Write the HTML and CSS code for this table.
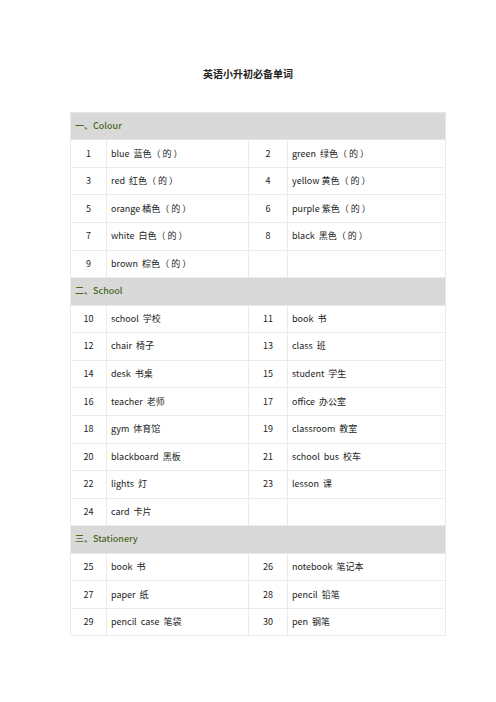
FILE: index.html
```html
<!DOCTYPE html>
<html lang="zh">
<head>
<meta charset="utf-8">
<title>英语小升初必备单词</title>
<link rel="stylesheet" href="styles.css">
</head>
<body>
<h1 class="title">英语小升初必备单词</h1>
<table class="words">
  <colgroup>
    <col class="c-num"><col class="c-word"><col class="c-num2"><col class="c-word2">
  </colgroup>
  <tr class="sec"><td colspan="4">一、Colour</td></tr>
  <tr><td class="n">1</td><td>blue&nbsp; 蓝色<span class="pr">（的）</span></td><td class="n">2</td><td>green&nbsp; 绿色<span class="pr">（的）</span></td></tr>
  <tr><td class="n">3</td><td>red&nbsp; 红色<span class="pr">（的）</span></td><td class="n">4</td><td>yellow 黄色<span class="pr">（的）</span></td></tr>
  <tr><td class="n">5</td><td>orange 橘色<span class="pr">（的）</span></td><td class="n">6</td><td>purple 紫色<span class="pr">（的）</span></td></tr>
  <tr><td class="n">7</td><td>white&nbsp; 白色<span class="pr">（的）</span></td><td class="n">8</td><td>black&nbsp; 黑色<span class="pr">（的）</span></td></tr>
  <tr><td class="n">9</td><td>brown&nbsp; 棕色<span class="pr">（的）</span></td><td></td><td></td></tr>
  <tr class="sec"><td colspan="4">二、School</td></tr>
  <tr><td class="n">10</td><td>school&nbsp; 学校</td><td class="n">11</td><td>book&nbsp; 书</td></tr>
  <tr><td class="n">12</td><td>chair&nbsp; 椅子</td><td class="n">13</td><td>class&nbsp; 班</td></tr>
  <tr><td class="n">14</td><td>desk&nbsp; 书桌</td><td class="n">15</td><td>student&nbsp; 学生</td></tr>
  <tr><td class="n">16</td><td>teacher&nbsp; 老师</td><td class="n">17</td><td>office&nbsp; 办公室</td></tr>
  <tr><td class="n">18</td><td>gym&nbsp; 体育馆</td><td class="n">19</td><td>classroom&nbsp; 教室</td></tr>
  <tr><td class="n">20</td><td>blackboard&nbsp; 黑板</td><td class="n">21</td><td>school&nbsp; bus&nbsp; 校车</td></tr>
  <tr><td class="n">22</td><td>lights&nbsp; 灯</td><td class="n">23</td><td>lesson&nbsp; 课</td></tr>
  <tr><td class="n">24</td><td>card&nbsp; 卡片</td><td></td><td></td></tr>
  <tr class="sec"><td colspan="4">三、Stationery</td></tr>
  <tr><td class="n">25</td><td>book&nbsp; 书</td><td class="n">26</td><td>notebook&nbsp; 笔记本</td></tr>
  <tr><td class="n">27</td><td>paper&nbsp; 纸</td><td class="n">28</td><td>pencil&nbsp; 铅笔</td></tr>
  <tr><td class="n">29</td><td>pencil&nbsp; case&nbsp; 笔袋</td><td class="n">30</td><td>pen&nbsp; 钢笔</td></tr>
</table>
</body>
</html>
```
FILE: styles.css
```css
html, body {
  margin: 0;
  padding: 0;
  background: #ffffff;
}
body {
  font-family: "Noto Sans CJK SC", "Noto Sans", sans-serif;
  color: #222;
  padding-top: 67px;
}
.title {
  margin: 0;
  font-size: 10px;
  line-height: 14px;
  font-weight: 700;
  text-align: center;
  color: #222;
}
.words {
  margin: 31px 0 0 70px;
  width: 375px;
  border-collapse: collapse;
  table-layout: fixed;
  font-size: 9px;
}
.c-num { width: 36px; }
.c-word { width: 142px; }
.c-num2 { width: 39px; }
.c-word2 { width: 158px; }
.words td {
  border: 1px solid #ebebeb;
  height: 26.6px;
  padding: 0 0 0 4px;
  vertical-align: middle;
  white-space: nowrap;
  line-height: 12px;
}
.words td.n {
  text-align: center;
  padding: 0;
}
.pr {
  letter-spacing: 2px;
}
.words tr.sec td {
  background: #d9d9d9;
  color: #4a6a1f;
  font-weight: 500;
  font-size: 9px;
  height: 26.3px;
  padding-left: 4px;
  border-color: #e6e6e6;
}
```
